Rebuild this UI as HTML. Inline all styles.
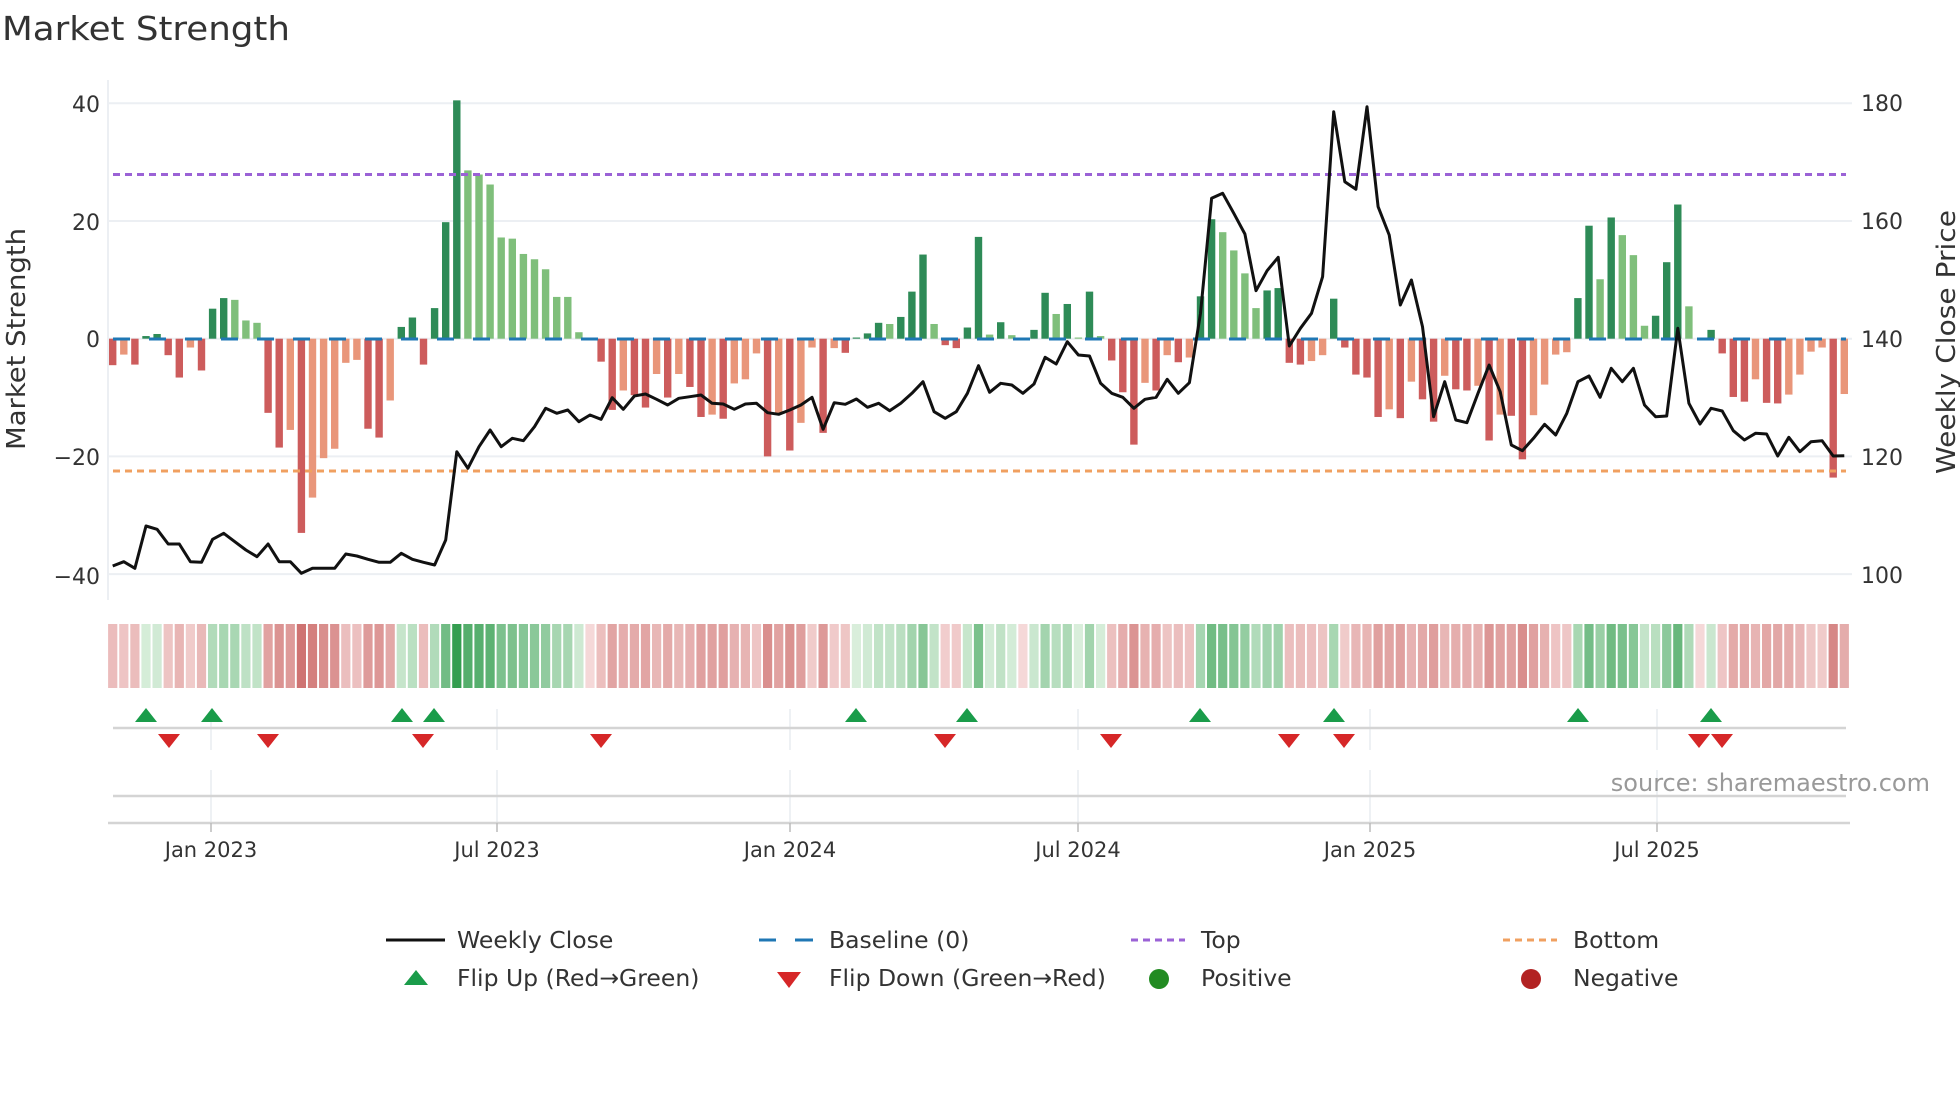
<!DOCTYPE html>
<html><head><meta charset="utf-8"><style>
html,body{margin:0;padding:0;background:#fff;}
svg{display:block;font-family:"DejaVu Sans","Liberation Sans",sans-serif;}
</style></head><body>
<svg id="s" xmlns="http://www.w3.org/2000/svg" width="1960" height="1102" viewBox="0 0 1960 1102">
<rect width="1960" height="1102" fill="#fff"/>
<text x="2" y="40" font-size="33" fill="#333" textLength="288" lengthAdjust="spacingAndGlyphs">Market Strength</text>
<g id="grid"></g>
<line x1="108" y1="80" x2="108" y2="600" stroke="#eceff3" stroke-width="2"/>
<g id="bars"></g>
<line x1="113" y1="339" x2="1846" y2="339" stroke="#1f77b4" stroke-width="3" stroke-dasharray="17 19"/>
<line x1="113" y1="174.5" x2="1846" y2="174.5" stroke="#9b62d6" stroke-width="3" stroke-dasharray="7 5"/>
<line x1="113" y1="471" x2="1846" y2="471" stroke="#f0a060" stroke-width="3" stroke-dasharray="7 5"/>
<polyline id="price" fill="none" stroke="#111" stroke-width="3" stroke-linejoin="round"/>
<g font-size="22" fill="#333">
<text x="100" y="112" text-anchor="end">40</text>
<text x="100" y="230" text-anchor="end">20</text>
<text x="100" y="347" text-anchor="end">0</text>
<text x="100" y="465" text-anchor="end">−20</text>
<text x="100" y="584" text-anchor="end">−40</text>
<text x="1861" y="111">180</text>
<text x="1861" y="229">160</text>
<text x="1861" y="347">140</text>
<text x="1861" y="465">120</text>
<text x="1861" y="583">100</text>
</g>
<text transform="translate(25,339) rotate(-90)" text-anchor="middle" font-size="26" fill="#333" textLength="222" lengthAdjust="spacingAndGlyphs">Market Strength</text>
<text transform="translate(1955,342) rotate(-90)" text-anchor="middle" font-size="26" fill="#333" textLength="264" lengthAdjust="spacingAndGlyphs">Weekly Close Price</text>
<g id="strip"></g>
<g stroke="#e8ecf0" stroke-width="1.5" id="vg"></g>
<line x1="113" y1="728" x2="1846" y2="728" stroke="#d4d4d4" stroke-width="2.5"/>
<line x1="113" y1="796" x2="1846" y2="796" stroke="#d4d4d4" stroke-width="2.5"/>
<line x1="108" y1="823" x2="1850" y2="823" stroke="#d4d4d4" stroke-width="2.5"/>
<g id="marks"></g>
<g id="ticks" font-size="21" fill="#333"></g>
<text x="1930" y="791" text-anchor="end" font-size="24" fill="#999">source: sharemaestro.com</text>
<g font-size="23.5" fill="#333">
<line x1="386" y1="940" x2="445" y2="940" stroke="#111" stroke-width="3"/>
<text x="457" y="948">Weekly Close</text>
<line x1="759" y1="940" x2="813" y2="940" stroke="#1f77b4" stroke-width="3" stroke-dasharray="17 19"/>
<line x1="796" y1="940" x2="813" y2="940" stroke="#1f77b4" stroke-width="3"/>
<text x="829" y="948">Baseline (0)</text>
<line x1="1131" y1="940" x2="1185" y2="940" stroke="#9b62d6" stroke-width="3" stroke-dasharray="7 5"/>
<text x="1201" y="948">Top</text>
<line x1="1503" y1="940" x2="1557" y2="940" stroke="#f0a060" stroke-width="3" stroke-dasharray="7 5"/>
<text x="1573" y="948">Bottom</text>
<polygon points="416,970 428,985 404,985" fill="#1a9c4a"/>
<text x="457" y="986">Flip Up (Red→Green)</text>
<polygon points="777,972 801,972 789,988" fill="#d62728"/>
<text x="829" y="986">Flip Down (Green→Red)</text>
<circle cx="1159" cy="979" r="10" fill="#228b22"/>
<text x="1201" y="986">Positive</text>
<circle cx="1531" cy="979" r="10" fill="#b22222"/>
<text x="1573" y="986">Negative</text>
</g>
</svg>
<script>
(function(){
var NS="http://www.w3.org/2000/svg";
function el(p,t,a){var e=document.createElementNS(NS,t);for(var k in a)e.setAttribute(k,a[k]);p.appendChild(e);return e;}
var bars="-4.5R,-2.7S,-4.4R,0.45D,0.8D,-2.8R,-6.6R,-1.5S,-5.4R,5.1D,6.9D,6.6L,3.1L,2.7L,-12.6R,-18.5R,-15.5S,-33R,-27S,-20.3S,-18.7S,-4.1S,-3.6S,-15.3R,-16.8R,-10.5S,2D,3.6D,-4.4R,5.2D,19.8D,40.5D,28.6L,27.9L,26.2L,17.2L,17L,14.4L,13.5L,11.8L,7.1L,7.1L,1.1L,0D,-3.9R,-12.1R,-8.8S,-9.6R,-11.7R,-6S,-10R,-6S,-8.2R,-13.3R,-12.9S,-13.6R,-7.6S,-6.9S,-2.5S,-20R,-12.7S,-19R,-14.3S,-1.5S,-16R,-1.6S,-2.4R,0.2D,0.9D,2.7D,2.5L,3.7D,8D,14.3D,2.5L,-1.1R,-1.6R,1.9D,17.3D,0.7L,2.8D,0.6L,0D,1.5D,7.8D,4.2L,5.9D,0.2L,8D,0.45L,-3.7R,-9.1R,-18R,-7.5S,-8.8R,-2.8S,-4R,-3.2S,7.2D,20.3D,18.1L,15L,11.1L,5.2L,8.2D,8.6D,-4.1R,-4.4R,-3.8S,-2.8S,6.8D,-1.5R,-6.1R,-6.6R,-13.3R,-12S,-13.5R,-7.3S,-10.3R,-14.1R,-6.3S,-8.6R,-8.8R,-8S,-17.3R,-12.9S,-13.1R,-20.5R,-13S,-7.8S,-2.7S,-2.3S,6.9D,19.2D,10.1L,20.6D,17.6L,14.2L,2.2L,3.9D,13D,22.8D,5.5L,0D,1.5D,-2.5R,-9.9R,-10.7R,-6.9S,-10.9R,-11R,-9.5S,-6.1S,-2.2S,-1.5S,-23.6R,-9.4S".split(",");
var pz=[1458,1445,1465,1338,1348,1392,1392,1445,1447,1378,1360,1385,1410,1430,1392,1445,1445,1480,1465,1465,1465,1422,1428,1438,1447,1447,1420,1438,1447,1455,1380,1115,1165,1100,1050,1100,1075,1082,1040,985,1000,990,
1025,1005,1018,953,988,948,942,958,975,955,950,945,970,972,988,972,970,998,1003,990,975,952,1048,968,973,957,982,970,992,970,940,905,995,1015,995,940,857,937,910,915,
940,912,832,852,785,825,828,910,940,952,985,958,952,898,940,908,700,355,340,400,462,632,572,532,798,745,700,590,95,305,328,80,380,465,675,600,740,1010,905,1020,1028,
940,855,935,1095,1112,1075,1033,1065,1000,905,888,952,865,905,865,975,1010,1008,745,970,1032,985,993,1052,1080,1060,1062,1128,1072,1115,1085,1082,1128,1127];
var X0=112.7,SP=11.1,Y0=338.7,K=5.885;
var cols={D:"#2e8b57",L:"#7fbf7b",R:"#cd5c5c",S:"#e9967a"};
var g=document.getElementById("grid");
[40,20,0,-20,-40].forEach(function(v){var y=Y0-v*K;el(g,"line",{x1:108,y1:y,x2:1852,y2:y,stroke:"#eceff3","stroke-width":2});});
var b=document.getElementById("bars"),st=document.getElementById("strip");
function mix(a,c,t){return "rgb("+a.map(function(x,i){return Math.round(x+(c[i]-x)*t);}).join(",")+")";}
bars.forEach(function(s,i){
 var c=s.slice(-1),v=parseFloat(s),cx=X0+i*SP;
 var y1=Y0,y2=Y0-v*K; if(y2<y1){var t=y1;y1=y2;y2=t;}
 if(Math.abs(v)>0.05)el(b,"rect",{x:cx-3.7,y:y1,width:7.4,height:Math.max(1,y2-y1),fill:cols[c]});
 var t=Math.pow(Math.min(1,Math.abs(v)/40),0.65);
 var f=v>0?mix([222,241,224],[52,158,80],t):mix([245,216,216],[202,102,100],t);
 el(st,"rect",{x:cx-4.6,y:624,width:9.2,height:64,fill:f});
});
var pts=pz.map(function(z,i){return (X0+i*SP).toFixed(1)+","+(80+z/3).toFixed(1);});
document.getElementById("price").setAttribute("points",pts.join(" "));
var vg=document.getElementById("vg"),tk=document.getElementById("ticks");
[[211,"Jan 2023"],[497,"Jul 2023"],[790,"Jan 2024"],[1078,"Jul 2024"],[1370,"Jan 2025"],[1657,"Jul 2025"]].forEach(function(a){
 el(vg,"line",{x1:a[0],y1:709,x2:a[0],y2:750});
 el(vg,"line",{x1:a[0],y1:770,x2:a[0],y2:823});
 el(tk,"line",{x1:a[0],y1:823,x2:a[0],y2:832,stroke:"#bbb","stroke-width":1.5});
 var t=el(tk,"text",{x:a[0],y:857,"text-anchor":"middle"});t.textContent=a[1];
});
var m=document.getElementById("marks");
[146,212,402,434,856,967,1200,1334,1578,1711].forEach(function(x){el(m,"polygon",{points:x+",708 "+(x+11)+",722 "+(x-11)+",722",fill:"#1a9c4a"});});
[169,268,423,601,945,1111,1289,1344,1699,1722].forEach(function(x){el(m,"polygon",{points:(x-11)+",734 "+(x+11)+",734 "+x+",748",fill:"#d62728"});});
})();
</script>
</body></html>
